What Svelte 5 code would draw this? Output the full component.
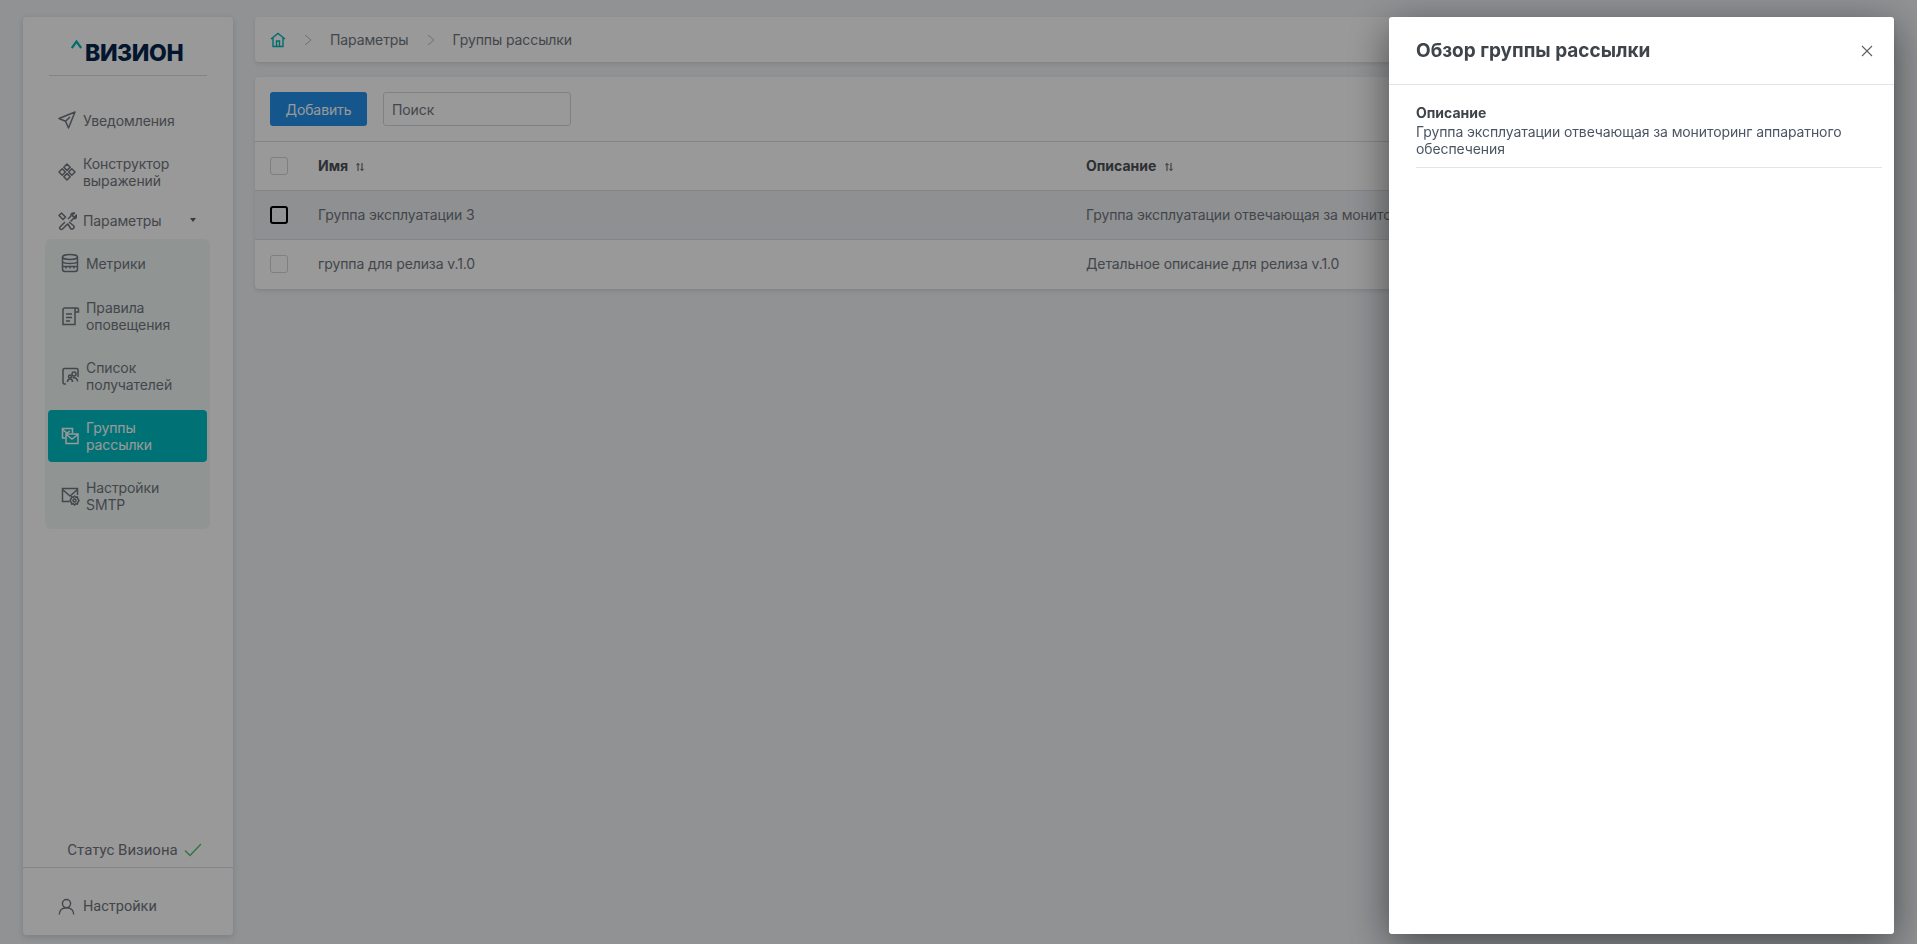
<script>
  const rows = [
    { name: 'Группа эксплуатации 3', desc: 'Группа эксплуатации отвечающая за мониторинг аппаратного обеспечения', hover: true },
    { name: 'группа для релиза v.1.0', desc: 'Детальное описание для релиза v.1.0', hover: false }
  ];
</script>

{#snippet sortIcon()}
  <svg class="sort" viewBox="0 0 10 10" width="10" height="10" fill="none" stroke="currentColor" stroke-width="1">
    <path d="M3 9V1.5M1.3 3.2 3 1.5l1.7 1.7M7 1v7.500M5.300 6.800 7 8.500l1.700-1.700" />
  </svg>
{/snippet}

<div class="page">
  <aside class="sidebar">
    <div class="logo"><svg viewBox="0 0 11 9" width="11" height="9" fill="none" stroke="#00b5b8" stroke-width="2.200"><path d="M.8 8 5.500 1.500 10.200 8" /></svg><span>ВИЗИОН</span></div>

    <nav class="nav">
      <a class="item single">
        <svg viewBox="0 0 20 20" width="20" height="20" fill="none" stroke="currentColor" stroke-width="1.500" stroke-linejoin="round"><path d="M18 2 2 8.500l6.500 2.800L11.500 18 18 2ZM8.500 11.300 13 7" /></svg>
        <span>Уведомления</span>
      </a>
      <a class="item double">
        <svg viewBox="0 0 20 20" width="20" height="20" fill="none" stroke="currentColor" stroke-width="1.500" stroke-linejoin="round"><path d="m10 2 3.200 3.200L10 8.400 6.800 5.200 10 2ZM5.200 6.800 8.400 10l-3.200 3.200L2 10l3.200-3.200ZM14.800 6.800 18 10l-3.200 3.200-3.200-3.200 3.200-3.200ZM10 11.600l3.200 3.200L10 18l-3.200-3.200 3.200-3.200Z" /></svg>
        <span>Конструктор выражений</span>
      </a>
      <a class="item parent">
        <svg viewBox="0 0 20 20" width="20" height="20" fill="none" stroke="currentColor" stroke-width="1.500" stroke-linejoin="round"><path d="M2 4.500 4.500 2l4 4L6 8.500l-4-4ZM8 11l-5 5c-1 2 1 3 2.500 2l5-5M11 8l3-3c-.5-2 1-3.500 3.500-3l-2 2 .5 1.500 1.500.5 2-2c.5 2.500-1 4-3 3.500l-3 3M10.500 12.500l3.500 5.500c2 .5 3.500-1 3-3l-5-4" /></svg>
        <span>Параметры</span>
        <i class="caret"></i>
      </a>

      <div class="submenu">
        <a class="item metric">
          <svg viewBox="0 0 20 20" width="20" height="20" fill="none" stroke="currentColor" stroke-width="1.500"><ellipse cx="10" cy="4" rx="7.500" ry="2.500" /><path d="M2.500 4v12c0 1.500 1 2.500 2.500 2.500h10c1.500 0 2.500-1 2.500-2.500V4M2.500 9c2.500 2 12.500 2 15 0M2.500 13.500h15M6 13.500v2M10 13.500v2M14 13.500v2" /></svg>
          <span>Метрики</span>
        </a>
        <a class="item double">
          <svg viewBox="0 0 20 20" width="20" height="20" fill="none" stroke="currentColor" stroke-width="1.500"><path d="M3 4c0-1.200 1-2 2-2h12c1 0 1.500 1 1.500 2v2h-3.500M3 4v14.500h12V4c0-1 .5-2 1.500-2M6 8h6M6 11.500h6M6 15h4" /></svg>
          <span>Правила оповещения</span>
        </a>
        <a class="item double">
          <svg viewBox="0 0 20 20" width="20" height="20" fill="none" stroke="currentColor" stroke-width="1.500"><path d="M6 18H4.500c-1 0-1.500-.5-1.500-1.500V4c0-1 .5-1.500 1.500-1.500h12c1 0 1.500.5 1.500 1.500v7M7.500 16c0-2 1.200-3 2.500-3s2.500 1 2.500 3M12.500 11.500c2.500 0 5 1 5 4" /><circle cx="10" cy="10.500" r="1.500" /><circle cx="14" cy="8" r="2" /></svg>
          <span>Список получателей</span>
        </a>
        <a class="item double active">
          <svg viewBox="0 0 20 20" width="20" height="20" fill="none" stroke="currentColor" stroke-width="1.500"><path d="M5.500 12H2.500V2.500h10V7M2.500 3.500 7 7l3-2" /><path d="M6 8h12v9.500H6V8ZM6 8.500l6 4.500 6-4.500" /></svg>
          <span>Группы рассылки</span>
        </a>
        <a class="item double">
          <svg viewBox="0 0 20 20" width="20" height="20" fill="none" stroke="currentColor" stroke-width="1.500"><path d="M9.500 15.500h-7v-13h15V9M2.500 3.500 10 10l7.500-6.500" /><circle cx="14.500" cy="14.500" r="1.500" /><path d="m14.500 10 1.200 1.200 1.600-.3.400 1.600 1.300 2-1.300 2-.4 1.600-1.600-.3-1.200 1.200-1.200-1.200-1.600.3-.4-1.600-1.300-2 1.300-2 .4-1.600 1.600.3 1.200-1.200Z" /></svg>
          <span>Настройки SMTP</span>
        </a>
      </div>
    </nav>

    <div class="status">
      <span>Статус Визиона</span>
      <svg viewBox="0 0 18 14" width="18" height="14" fill="none" stroke="#4cc46f" stroke-width="1.300"><path d="m1 7.500 5 5L17 1" /></svg>
    </div>
    <a class="item settings">
      <svg viewBox="0 0 20 20" width="17" height="17" fill="none" stroke="currentColor" stroke-width="1.700"><circle cx="10" cy="6.500" r="4.800" /><path d="M1.500 19.500c0-5 3.500-8 8.500-8s8.500 3 8.500 8" /></svg>
      <span>Настройки</span>
    </a>
  </aside>

  <main class="content">
    <div class="crumbs">
      <svg class="home" viewBox="0 0 16 16" width="16" height="16" fill="none" stroke="#00b5b8" stroke-width="1.400"><path d="M1 7 8 1.500 15 7M3 6v8.500h10V6M6.500 14.500V9h3v5.500" /></svg>
      <svg class="chev" viewBox="0 0 8 12" width="8" height="12" fill="none" stroke="#b9bcc0" stroke-width="1"><path d="m1 1 6 5-6 5" /></svg>
      <span>Параметры</span>
      <svg class="chev" viewBox="0 0 8 12" width="8" height="12" fill="none" stroke="#b9bcc0" stroke-width="1"><path d="m1 1 6 5-6 5" /></svg>
      <span>Группы рассылки</span>
    </div>

    <section class="card">
      <div class="toolbar">
        <button class="add">Добавить</button>
        <input class="search" placeholder="Поиск" />
      </div>
      <div class="row head">
        <div class="check"><i class="box"></i></div>
        <div class="col-name">Имя {@render sortIcon()}</div>
        <div class="col-desc">Описание {@render sortIcon()}</div>
      </div>
      {#each rows as r}
        <div class="row" class:hover={r.hover}>
          <div class="check"><i class="box" class:focus={r.hover}></i></div>
          <div class="col-name">{r.name}</div>
          <div class="col-desc">{r.desc}</div>
        </div>
      {/each}
    </section>
  </main>
</div>

<div class="backdrop"></div>

<div class="drawer">
  <header>
    <h2>Обзор группы рассылки</h2>
    <svg viewBox="0 0 12 12" width="12" height="12" fill="none" stroke="#5b6066" stroke-width="1.100"><path d="m1 1 10 10M11 1 1 11" /></svg>
  </header>
  <div class="field">
    <h3>Описание</h3>
    <p>Группа эксплуатации отвечающая за мониторинг аппаратного обеспечения</p>
  </div>
</div>

<style>
  :global(body) {
    margin: 0;
    background: #f1f3f7;
    font-family: Inter, "Noto Sans", sans-serif;
    font-size: 14px;
    letter-spacing: -0.1px;
    color: #70757d;
  }

  .page {
    display: flex;
    gap: 22px;
    height: 944px;
    padding: 17px 23px 9px;
    box-sizing: border-box;
  }

  .sidebar {
    width: 210px;
    flex: none;
    display: flex;
    flex-direction: column;
    background: #fff;
    border-radius: 4px;
    box-shadow: 0 2px 6px rgba(0, 0, 0, 0.14);
  }

  .logo {
    display: flex;
    align-items: flex-start;
    gap: 3px;
    margin: 0 26px;
    padding: 24px 0 11px 22px;
    height: 23px;
    border-bottom: 1px solid #d9dce1;
    color: #04264d;
    font-weight: 800;
    font-size: 23px;
    line-height: 24px;
    letter-spacing: -0.4px;
  }

  .logo svg {
    margin-top: -1px;
  }

  .nav {
    flex: 1;
    padding-top: 19px;
  }

  .item {
    display: flex;
    align-items: center;
    gap: 6px;
    line-height: 17px;
    font-size: 14px;
  }

  .item svg {
    flex: none;
  }

  .nav > .single {
    padding-left: 34px;
    height: 50px;
  }

  .nav > .double {
    height: 54px;
    padding-left: 34px;
    padding-right: 40px;
  }

  .parent {
    height: 40px;
    padding: 3px 0 0 34px;
    box-sizing: border-box;
    position: relative;
  }

  .caret {
    position: absolute;
    left: 167px;
    top: 19px;
    border: 3.5px solid transparent;
    border-top: 4px solid #5a5f66;
    border-bottom: 0;
  }

  .submenu {
    margin-left: 22px;
    width: 165px;
    height: 290px;
    padding: 0 3px;
    box-sizing: border-box;
    background: #f1f8f6;
    border-radius: 6px;
  }

  .submenu .item {
    padding-left: 12px;
    padding-right: 20px;
    gap: 6px;
  }

  .submenu .metric {
    height: 47px;
    padding-top: 1px;
    box-sizing: border-box;
  }

  .submenu .double {
    height: 60px;
  }

  .submenu .active {
    height: 52px;
    margin: 4px 0;
    background: #00bfc5;
    color: #fff;
    border-radius: 4px;
  }

  .status {
    display: flex;
    justify-content: center;
    align-items: center;
    gap: 6px;
    height: 34px;
    font-family: Roboto, sans-serif;
    font-size: 15px;
    letter-spacing: 0;
    padding-left: 17px;
    padding-right: 4px;
    border-bottom: 1px solid #d9dce1;
  }

  .settings {
    height: 67px;
    padding: 10px 0 0 35px;
    box-sizing: border-box;
    gap: 8px;
    font-family: Roboto, sans-serif;
    font-size: 14.500px;
    letter-spacing: 0;
  }

  .content {
    flex: 1;
    min-width: 0;
    display: flex;
    flex-direction: column;
    gap: 15px;
  }

  .crumbs {
    height: 45px;
    display: flex;
    align-items: center;
    gap: 18px;
    padding-left: 15px;
    background: #fff;
    border-radius: 4px;
    box-shadow: 0 2px 4px rgba(0, 0, 0, 0.1);
  }

  .card {
    padding-bottom: 1px;
    background: #fff;
    border-radius: 4px;
    box-shadow: 0 2px 4px rgba(0, 0, 0, 0.1);
  }

  .toolbar {
    display: flex;
    align-items: center;
    gap: 16px;
    height: 64px;
    padding-left: 15px;
  }

  .add {
    width: 97px;
    height: 34px;
    border: 0;
    border-radius: 3px;
    background: #2490ea;
    color: #fff;
    font: inherit;
    letter-spacing: inherit;
  }

  .search {
    width: 188px;
    height: 34px;
    box-sizing: border-box;
    padding: 0 8px;
    border: 1px solid #d5d8dd;
    border-radius: 3px;
    font: inherit;
    letter-spacing: inherit;
    background: #fff;
  }

  .search::placeholder {
    color: #70757d;
  }

  .row {
    display: flex;
    align-items: center;
    height: 49px;
    padding-bottom: 1px;
    border-top: 1px solid #d9dee5;
    box-sizing: border-box;
  }

  .row.head {
    font-weight: 700;
    letter-spacing: 0;
    color: #4b5055;
  }

  .row.hover {
    background: #eef0f4;
  }

  .check {
    width: 63px;
    padding-left: 15px;
    box-sizing: border-box;
    flex: none;
  }

  .box {
    display: block;
    width: 18px;
    height: 18px;
    box-sizing: border-box;
    border: 1.500px solid #d0d4da;
    border-radius: 3px;
    background: #fff;
  }

  .box.focus {
    border: 2px solid #000;
    background: #f4f5f7;
  }

  .col-name {
    width: 768px;
    flex: none;
  }

  .col-desc {
    white-space: nowrap;
  }

  .sort {
    margin-left: 4px;
    vertical-align: -1px;
  }

  .backdrop {
    position: fixed;
    inset: 0;
    background: rgba(0, 0, 0, 0.4);
  }

  .drawer {
    position: fixed;
    left: 1389px;
    top: 17px;
    width: 505px;
    height: 917px;
    background: #fff;
    border-radius: 3px;
    box-shadow: 0 10px 40px rgba(0, 0, 0, 0.5);
    color: #4b5563;
  }

  .drawer header {
    display: flex;
    align-items: center;
    justify-content: space-between;
    height: 67px;
    padding: 0 21px 0 27px;
    border-bottom: 1px solid #e2e4ea;
  }

  h2 {
    margin: 0;
    font-size: 19px;
    font-weight: 700;
    letter-spacing: 0;
    color: #3f444b;
  }

  .field {
    margin: 17px 12px 0 27px;
    padding-bottom: 10px;
    border-bottom: 1px solid #e2e4ea;
  }

  h3 {
    margin: 0;
    font-size: 14px;
    line-height: 21px;
    font-weight: 700;
    letter-spacing: 0;
    color: #3f444b;
  }

  p {
    margin: 0;
    line-height: 17px;
    font-size: 14px;
  }
</style>
